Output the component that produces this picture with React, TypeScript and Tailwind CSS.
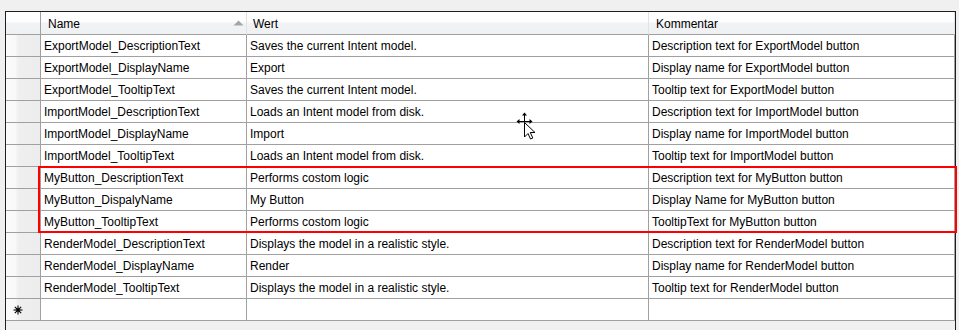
import React from "react";

const rows: [string, string, string][] = [
  ["ExportModel_DescriptionText", "Saves the current Intent model.", "Description text for ExportModel button"],
  ["ExportModel_DisplayName", "Export", "Display name for ExportModel button"],
  ["ExportModel_TooltipText", "Saves the current Intent model.", "Tooltip text for ExportModel button"],
  ["ImportModel_DescriptionText", "Loads an Intent model from disk.", "Description text for ImportModel button"],
  ["ImportModel_DisplayName", "Import", "Display name for ImportModel button"],
  ["ImportModel_TooltipText", "Loads an Intent model from disk.", "Tooltip text for ImportModel button"],
  ["MyButton_DescriptionText", "Performs costom logic", "Description text for MyButton button"],
  ["MyButton_DispalyName", "My Button", "Display Name for MyButton button"],
  ["MyButton_TooltipText", "Performs costom logic", "TooltipText for MyButton button"],
  ["RenderModel_DescriptionText", "Displays the model in a realistic style.", "Description text for RenderModel button"],
  ["RenderModel_DisplayName", "Render", "Display name for RenderModel button"],
  ["RenderModel_TooltipText", "Displays the model in a realistic style.", "Tooltip text for RenderModel button"],
];

const headerBg =
  "bg-[linear-gradient(to_bottom,#ffffff_0%,#fdfdfd_45%,#f2f3f5_50%,#eff0f2_100%)]";
const rowHeadBg =
  "bg-[linear-gradient(to_right,#fbfbfb_0%,#f8f8f8_28%,#efefef_36%,#ededed_100%)]";
const cell = "h-[22px] border-r border-b border-[#a0a0a0] bg-white pl-[3px] flex items-center whitespace-nowrap overflow-hidden";

function Asterisk() {
  return (
    <svg width="10" height="10" viewBox="0 0 10 10">
      <g stroke="#000" strokeWidth="1.1">
        <line x1="5" y1="0.5" x2="5" y2="9.5" />
        <line x1="0.5" y1="5" x2="9.5" y2="5" />
        <line x1="1.8" y1="1.8" x2="8.2" y2="8.2" />
        <line x1="8.2" y1="1.8" x2="1.8" y2="8.2" />
      </g>
      <rect x="3.5" y="3.5" width="3" height="3" fill="#000" />
    </svg>
  );
}

export default function App() {
  return (
    <div
      className="relative w-[959px] h-[330px] overflow-hidden bg-[#f0f0f0] pt-[11px] pl-[5px] text-[12px] text-black"
      style={{ fontFamily: '"Liberation Sans", Arial, sans-serif' }}
    >
      <div className="w-[951px] h-[319px] border-x border-t border-[#1e1e1e] grid grid-cols-[35px_206px_402px_306px] content-start">
        {/* header */}
        <div className={`h-[23px] border-r border-b border-[#a0a0a0] ${headerBg}`} />
        <div className={`h-[23px] border-r border-b border-r-[#e2e2e2] border-b-[#a0a0a0] ${headerBg} flex items-center justify-between pl-[7px] pr-[2px] pt-[1px]`}>
          <span>Name</span>
          <svg width="11" height="6" viewBox="0 0 11 6" className="mb-[1px]">
            <polygon points="5.5,0.5 10.5,5.5 0.5,5.5" fill="#a5a5a5" />
          </svg>
        </div>
        <div className={`h-[23px] border-r border-b border-r-[#e2e2e2] border-b-[#a0a0a0] ${headerBg} flex items-center pl-[6px] pt-[1px]`}>
          Wert
        </div>
        <div className={`h-[23px] border-r border-b border-r-[#e2e2e2] border-b-[#a0a0a0] ${headerBg} flex items-center pl-[7px] pt-[1px]`}>
          Kommentar
        </div>

        {rows.map((r, i) => (
          <React.Fragment key={i}>
            <div className={`h-[22px] border-r border-b border-[#a0a0a0] ${rowHeadBg}`} />
            <div className={cell}>{r[0]}</div>
            <div className={cell}>{r[1]}</div>
            <div className={cell}>{r[2]}</div>
          </React.Fragment>
        ))}

        {/* new row */}
        <div className={`h-[22px] border-r border-b border-[#a0a0a0] ${rowHeadBg} flex items-center pl-[7px]`}>
          <Asterisk />
        </div>
        <div className={cell} />
        <div className={cell} />
        <div className={cell} />
      </div>

      {/* red highlight box */}
      <div className="absolute left-[38px] top-[166px] w-[919px] h-[67px] border-2 border-[#ff0000] pointer-events-none" />

      {/* move cursor */}
      <svg className="absolute left-[514px] top-[111px]" width="24" height="30" viewBox="0 0 24 30">
        <g stroke="#000" strokeWidth="1" fill="#000">
          <line x1="10.5" y1="3" x2="10.5" y2="11" />
          <line x1="4" y1="10.5" x2="17" y2="10.5" />
        </g>
        <polygon points="10.5,1.5 8,4.5 13,4.5" fill="#000" />
        <polygon points="2.5,10.5 5.5,8 5.5,13" fill="#000" />
        <polygon points="18.5,10.5 15.5,8 15.5,13" fill="#000" />
        <path d="M10.5 11.5 V26 L14 22.5 L16.5 28 L18.8 27 L16.3 21.5 L21 21.5 Z" fill="#fff" stroke="#000" strokeWidth="1" strokeLinejoin="miter" />
      </svg>
    </div>
  );
}
